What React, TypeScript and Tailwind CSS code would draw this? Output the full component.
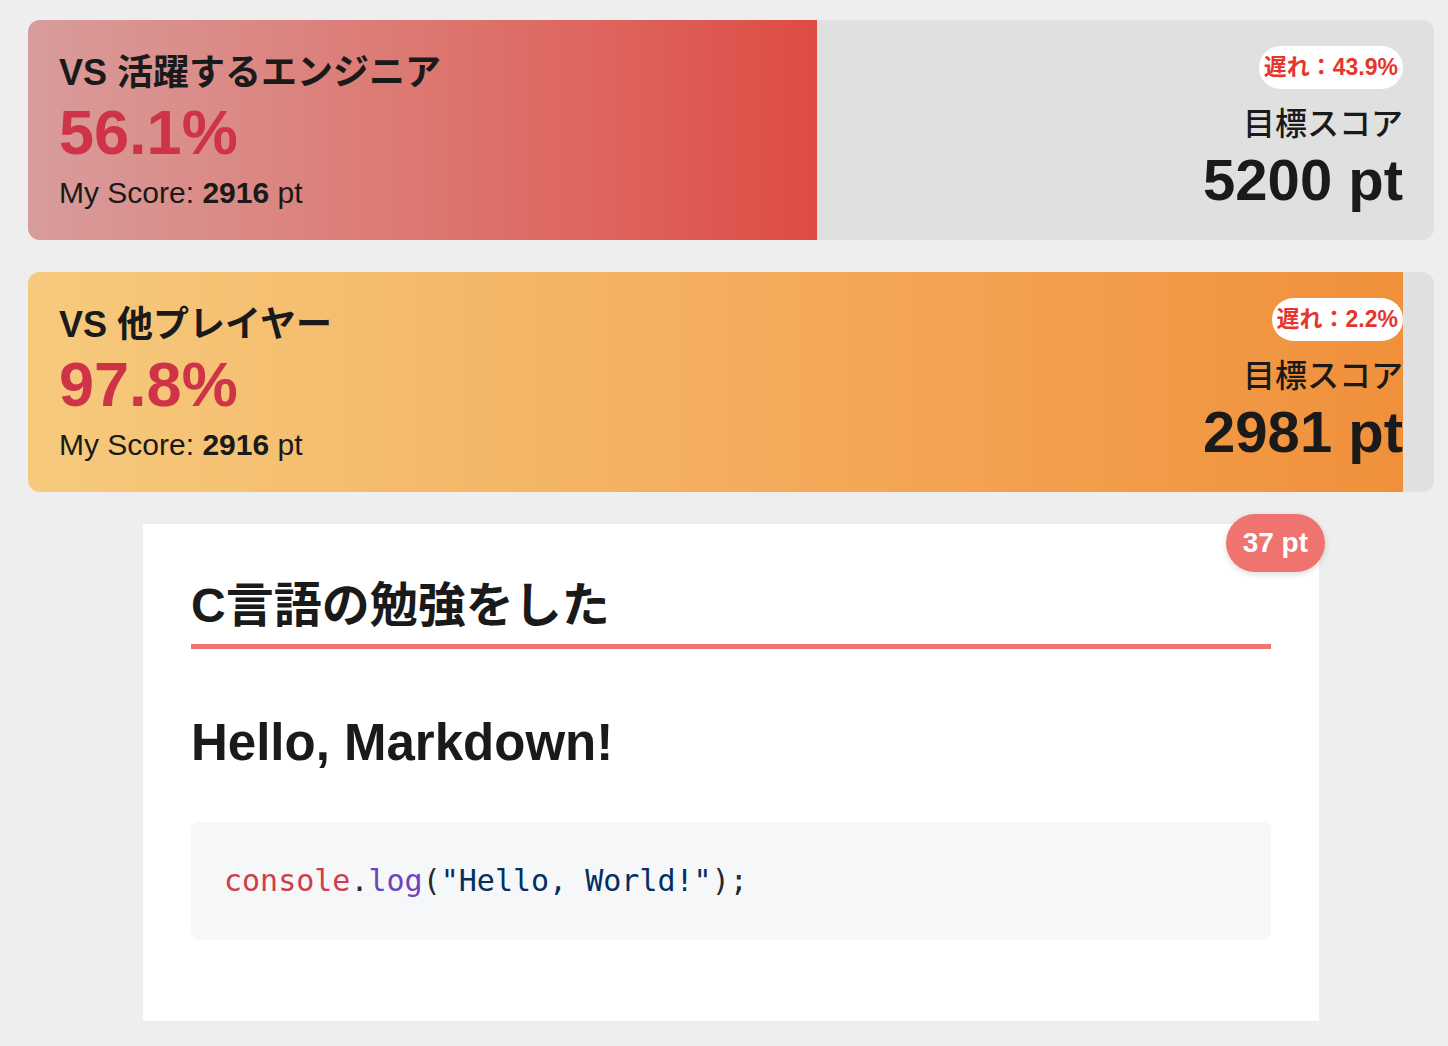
import React from "react"

const sans = "font-['Liberation_Sans','Noto_Sans_CJK_JP',sans-serif]"

type Rival = {
  label: string
  ratio: number
  myScore: number
  target: number
  behind: string
  fill: string
}

const rivals: Rival[] = [
  {
    label: "VS 活躍するエンジニア",
    ratio: 56.1,
    myScore: 2916,
    target: 5200,
    behind: "43.9%",
    fill: "bg-gradient-to-r from-[#d89c9c] to-[#dd4b44]",
  },
  {
    label: "VS 他プレイヤー",
    ratio: 97.8,
    myScore: 2916,
    target: 2981,
    behind: "2.2%",
    fill: "bg-gradient-to-r from-[#f6ca7d] to-[#f0903a]",
  },
]

function RivalCard({ rival }: { rival: Rival }) {
  return (
    <div className="relative h-[220px] overflow-hidden rounded-[12px] bg-[#e0e0e0]">
      {/* progress fill */}
      <div className={`absolute inset-y-0 left-0 ${rival.fill}`} style={{ width: `${rival.ratio}%` }} />
      <div className="relative flex h-full justify-between px-[31px] pt-[26px] text-[#1a1a1a]">
        <div className="flex flex-col">
          <div className="mt-[5px] text-[36px] font-bold leading-[43px]">{rival.label}</div>
          <div className="mt-[4px] text-[63px] font-bold leading-[69px] text-[#cf3347]">{rival.ratio}%</div>
          <div className="mt-[8px] text-[30px] leading-[36px]">
            My Score: <span className="font-bold">{rival.myScore}</span> pt
          </div>
        </div>
        <div className="flex flex-col items-end">
          <div className="rounded-full bg-white px-[5px] py-[6px] text-[23px] font-bold leading-[31px] text-[#e5362d]">
            遅れ：{rival.behind}
          </div>
          <div className="mt-[16px] text-[32px] font-medium leading-[38px]">目標スコア</div>
          <div className="mt-[5px] text-[58px] font-bold leading-[64px]">{rival.target} pt</div>
        </div>
      </div>
    </div>
  )
}

export default function App() {
  return (
    <div className={`min-h-[1046px] bg-[#eeeeee] pt-[20px] ${sans}`}>
      <div className="ml-[28px] flex w-[1406px] flex-col gap-[32px]">
        {rivals.map((r) => (
          <RivalCard key={r.label} rival={r} />
        ))}
        {/* activity */}
        <div className="relative mx-auto w-[1176px] bg-white px-[48px] pb-[81px] pt-[53px]">
          <div className="absolute -right-[6px] -top-[10px] flex h-[58px] items-center rounded-full bg-[#ef7470] px-[17px] text-[28px] font-bold text-white shadow-[0_2px_6px_rgba(0,0,0,0.15)]">
            37 pt
          </div>
          <h2 className="border-b-[5px] border-[#ef7470] pb-[9px] text-[48px] font-bold leading-[58px] text-[#1a1a1a]">
            C言語の勉強をした
          </h2>
          <h1 className="mt-[63px] text-[51px] font-bold leading-[61px] text-[#1a1a1a]">Hello, Markdown!</h1>
          <pre className="mt-[49px] rounded-[8px] bg-[#f6f7f9] px-[33px] py-[36px] font-['DejaVu_Sans_Mono',monospace] text-[30px] leading-[46px] text-[#24292e]">
            <span className="text-[#cf3e4a]">console</span>.<span className="text-[#6f42c1]">log</span>(
            <span className="text-[#032f62]">"Hello, World!"</span>);
          </pre>
        </div>
      </div>
    </div>
  )
}
